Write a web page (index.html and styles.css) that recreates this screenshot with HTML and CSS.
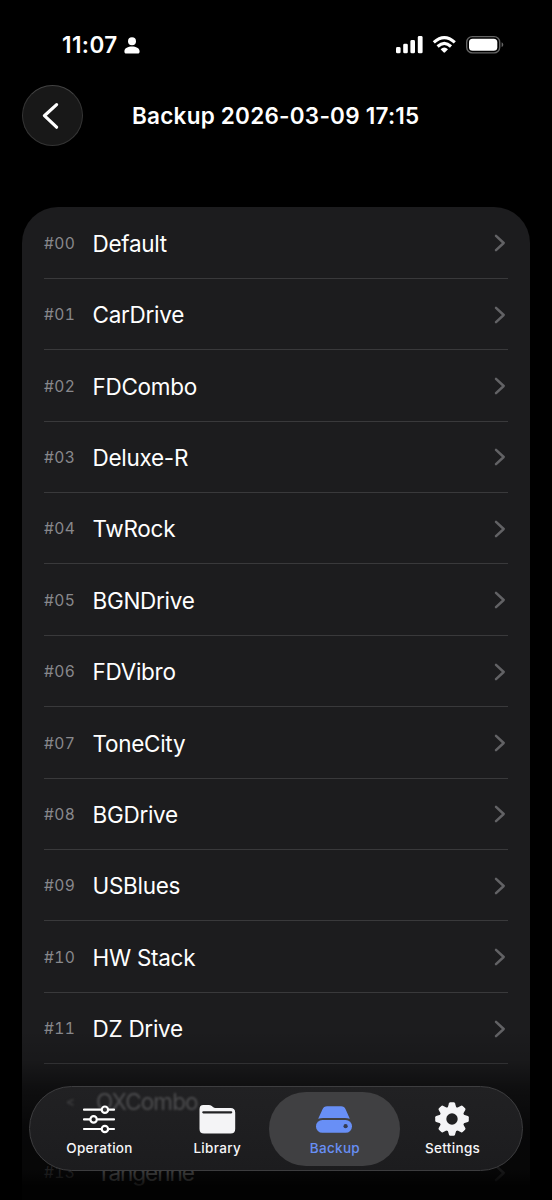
FILE: index.html
```html
<!DOCTYPE html>
<html lang="en">
<head>
<meta charset="utf-8">
<title>Backup</title>
<link rel="stylesheet" href="styles.css">
</head>
<body>
<main class="screen">
  <header class="status">
    <div class="clock"><span class="time">11:07</span>
      <svg class="person" width="16" height="17" viewBox="0 0 16 17" fill="#fff"><circle cx="8" cy="4.3" r="4"/><path d="M.4 14.2C.6 11.1 4 9.6 8 9.6s7.4 1.5 7.6 4.6c.1 1.5-.6 2.3-2 2.3H2.4c-1.4 0-2.1-.8-2-2.3Z"/></svg>
    </div>
    <svg class="indicators" width="110" height="20" viewBox="394 35 110 20">
      <g fill="#fff"><rect x="396" y="47" width="4.6" height="6.3" rx="1.4"/><rect x="403.2" y="43.7" width="4.6" height="9.6" rx="1.4"/><rect x="410.4" y="40" width="4.6" height="13.3" rx="1.4"/><rect x="417.8" y="36" width="4.8" height="17.3" rx="1.4"/></g>
      <g fill="none" stroke="#fff" stroke-width="3.1"><path d="M433.8 42.3Q444.3 32.8 454.8 42.3"/><path d="M437.6 46.5Q444.3 40.4 451 46.5"/></g>
      <path d="M440.6 49.2Q444.3 46 448 49.2L445.1 52.3Q444.3 53.1 443.5 52.3Z" fill="#fff"/>
      <rect x="466.7" y="36.6" width="33" height="16.3" rx="5.6" fill="none" stroke="#646464" stroke-width="1.4"/>
      <rect x="469" y="38.8" width="28.3" height="12" rx="3.6" fill="#fff"/>
      <path d="M501.6 42.3Q503.3 43 503.3 44.7T501.6 47.1Z" fill="#646464"/>
    </svg>
  </header>
  <div class="titlebar">
    <div class="back"><svg width="60" height="60" viewBox="0 0 60 60"><path d="M33.6 18.6 21.4 29.7 33.6 41.2" fill="none" stroke="#fff" stroke-width="3.2" stroke-linecap="round" stroke-linejoin="round"/></svg></div>
    <h1 class="title">Backup 2026-03-09 17:15</h1>
  </div>
  <section class="list" id="list"></section>
  <div class="fade"></div>
  <nav class="tabs">
    <div class="ghost"><span class="ghost-mark">&lt;</span><span class="ghost-name">OXCombo</span></div>
    <div class="tab">
      <svg width="38" height="38" viewBox="0 0 38 38"><g fill="none" stroke="#fff" stroke-width="2.2" stroke-linecap="round"><path d="M4 9.7H21M29 9.7H34M4 19.4H10M18 19.4H34M4 29H21M29 29H34"/><circle cx="24.9" cy="9.7" r="3.2"/><circle cx="13.6" cy="19.4" r="3.2"/><circle cx="24.9" cy="29" r="3.2"/></g></svg>
      <span class="label">Operation</span>
    </div>
    <div class="tab library">
      <svg width="38" height="38" viewBox="0 0 38 38"><path d="M1.5 9.2Q1.5 4.9 5.3 4.9h5.5q1.7 0 3 1.1l1.5 1.2q.8.7 2 .7h15.3q4.6 0 4.6 4.5v16.7q0 4.5-4.6 4.5H6q-4.5 0-4.5-4.5Z" fill="#f4f4f6"/><path d="M5.3 12.3H33.2" stroke="#222224" stroke-width="2.2" stroke-linecap="round"/></svg>
      <span class="label">Library</span>
    </div>
    <div class="tab active">
      <svg width="38" height="38" viewBox="0 0 38 38" fill="#688ff6"><path d="M3.2 18.8 7.4 9.4Q8.8 6.2 12.1 6.2h14q3.3 0 4.6 3.2L34.8 18.8Q32.4 18 30 18H8Q5.6 18 3.2 18.8Z"/><rect x="1" y="19.9" width="36" height="12.9" rx="6.4"/><circle cx="30.6" cy="26.2" r="2.1" fill="#353b50"/></svg>
      <span class="label">Backup</span>
    </div>
    <div class="tab settings">
      <svg width="38" height="38" viewBox="-19 -19 38 38"><g fill="#f4f4f6" id="gear"><circle r="12.6"/></g><circle r="5.7" fill="#202022"/></svg>
      <span class="label">Settings</span>
    </div>
  </nav>
</main>
<script src="app.js"></script>
</body>
</html>
```
FILE: styles.css
```css
* { box-sizing: border-box; }
body { margin: 0; background: #000; color: #fff; font-family: Inter, "Liberation Sans", sans-serif; }
.screen { position: relative; width: 552px; height: 1200px; overflow: hidden; background: #000; }
.status { height: 85px; padding: 35px 48px 0 62px; display: flex; justify-content: space-between; align-items: flex-start; }
.clock { display: flex; align-items: center; gap: 6px; height: 20px; }
.time { width: 55.5px; font-size: 22.5px; line-height: 20px; margin-top: -1px; font-weight: 600; letter-spacing: 0.4px; white-space: nowrap; }
.person { display: block; }
.titlebar { height: 122.4px; padding-left: 22px; display: flex; align-items: flex-start; }
.back { width: 61px; height: 61px; border-radius: 50%; border: 1px solid #353535; border-top-color: #434343; background: #181818; overflow: hidden; }
.back svg { display: block; }
.title { width: 288px; margin: 0 0 0 49px; font-size: 22.5px; line-height: 62px; font-weight: 600; white-space: nowrap; letter-spacing: 0.24px; }
.list { margin: 0 22px; padding: 0 22px; border-radius: 36px 36px 0 0; background: #1c1c1e; height: 1010px; }
.row { height: 71.4px; padding-top: 1.4px; display: flex; align-items: center; border-bottom: 1.4px solid #39393b; }
.number { width: 48.5px; font-size: 15.6px; letter-spacing: 0.4px; color: #88888c; font-variant-numeric: tabular-nums; }
.name { flex: 1; font-size: 22.5px; letter-spacing: -0.28px; color: #fff; white-space: nowrap; }
.row svg { display: block; margin-right: 2px; }
.covered { height: 71.4px; border-bottom: 1.4px solid #39393b; }
.row.receding { padding-top: 4px; }
.row.receding .name { padding-left: 4px; letter-spacing: -1px; }
.fade { position: absolute; left: 0; right: 0; bottom: 0; height: 170px; background: linear-gradient(rgba(0,0,0,0), rgba(0,0,0,.12) 18%, rgba(0,0,0,.48) 34%, rgba(0,0,0,.74) 60%, rgba(0,0,0,.77) 83%, rgba(0,0,0,.94) 92%); }
.tabs { position: absolute; left: 29px; top: 1086px; width: 494px; height: 85px; border-radius: 43px; border: 1.3px solid #3d3d3f; background: linear-gradient(#212123, #1c1c1e); padding: 4.5px 4px; display: flex; overflow: hidden; }
.tab { position: relative; width: 131px; height: 74px; margin-right: -13.3px; flex: none; display: flex; flex-direction: column; align-items: center; padding-top: 8px; border-radius: 37px; }
.tab svg { display: block; position: relative; left: -0.5px; }
.label { font-size: 13.5px; line-height: 17px; margin-top: 2px; font-weight: 550; letter-spacing: 0.3px; color: #f6f6f8; }
.active { background: #404042; }
.active .label { color: #688ff6; }
.ghost { position: absolute; left: 36px; top: 0; height: 28px; display: flex; align-items: center; filter: blur(1.2px); color: #4d4d4f; }
.ghost-mark { width: 30px; font-size: 13px; font-weight: 700; color: #3d3d3f; }
.ghost-name { font-size: 22.5px; letter-spacing: -0.9px; }
```
FILE: app.js
```js
const names = ["Default", "CarDrive", "FDCombo", "Deluxe-R", "TwRock", "BGNDrive", "FDVibro", "ToneCity", "BGDrive", "USBlues", "HW Stack", "DZ Drive", null, "Tangerine"];
document.getElementById("list").innerHTML = names.map((name, i) => name === null ? '<div class="covered"></div>' :
  `<div class="row${i > 12 ? " receding" : ""}"><span class="number">#${String(i).padStart(2, "0")}</span><span class="name">${name}</span><svg width="12" height="18" viewBox="0 0 12 18"><path d="M2 1.8 9.7 9 2 16.2" fill="none" stroke="#626265" stroke-width="2.5" stroke-linecap="round" stroke-linejoin="round"/></svg></div>`).join("");
document.getElementById("gear").innerHTML += Array.from({ length: 8 }, (_, i) =>
  `<path transform="rotate(${i * 45})" d="M-4.4-11-3-15.8Q-2.7-16.8-1.7-16.8H1.7Q2.7-16.8 3-15.8L4.4-11Z"/>`).join("");
```
